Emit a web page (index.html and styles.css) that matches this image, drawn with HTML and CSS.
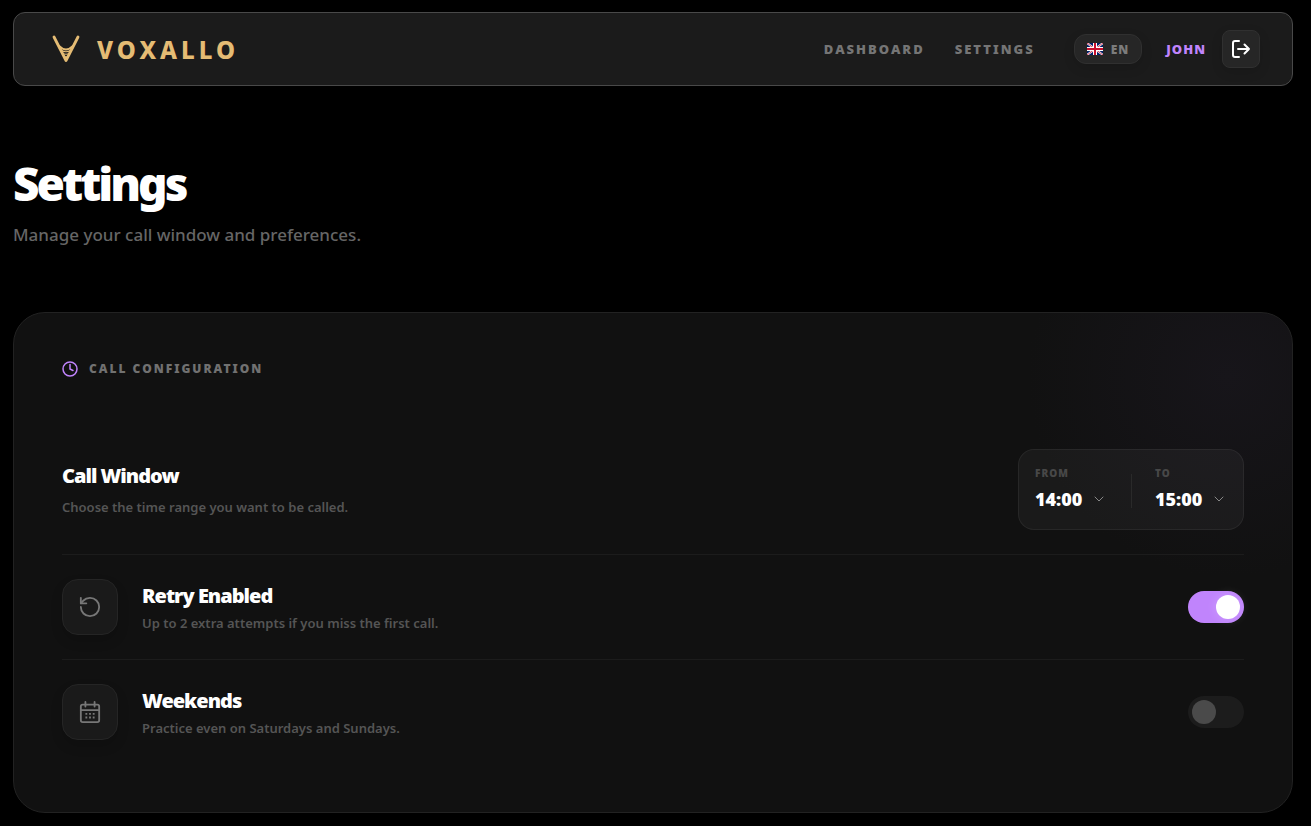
FILE: index.html
```html
<!DOCTYPE html>
<html lang="en">
<head>
    <meta charset="UTF-8">
    <meta name="viewport" content="width=device-width, initial-scale=1.0">
    <title>Voxallo - Settings</title>
    <link rel="stylesheet" href="styles.css">
</head>
<body>

<header class="navbar">
    <a href="#" class="brand">
        <svg class="brand-logo" viewBox="0 0 28 28" aria-hidden="true">
            <path d="M2 2 L14 25.500 L26 2" stroke-width="2.800"/>
            <path d="M7 11 Q14 18 21 11" stroke-width="2"/>
            <path d="M9 15 Q14 18.500 19 15" stroke-width="1.200"/>
            <path d="M10.500 18.500 Q14 20 17.500 18.500" stroke-width="1.200"/>
            <path d="M12.500 22 L15.500 22 L14 25 Z" stroke-width="1.500"/>
        </svg>
        <span class="brand-name">VOXALLO</span>
    </a>
    <nav class="nav-links">
        <a href="#">DASHBOARD</a>
        <a href="#">SETTINGS</a>
    </nav>
    <button type="button" class="lang-button">
        <svg class="flag" viewBox="0 0 16 12" aria-hidden="true">
            <rect width="16" height="12" fill="#012169"/>
            <path d="M0 0 L16 12 M16 0 L0 12" stroke="#fff" stroke-width="2"/>
            <path d="M0 0 L16 12 M16 0 L0 12" stroke="#c8102e" stroke-width="0.800"/>
            <path d="M8 0 V12 M0 6 H16" stroke="#fff" stroke-width="4"/>
            <path d="M8 0 V12 M0 6 H16" stroke="#c8102e" stroke-width="2"/>
        </svg>
        EN
    </button>
    <a href="#" class="user-name">JOHN</a>
    <button type="button" class="logout-button" aria-label="Log out">
        <svg class="icon" viewBox="0 0 20 20" aria-hidden="true">
            <path d="M8 2 H4 Q2 2 2 4 V16 Q2 18 4 18 H8"/>
            <path d="M7 10 H18 M13.500 5.500 L18 10 L13.500 14.500"/>
        </svg>
    </button>
</header>

<main>
    <h1>Settings</h1>
    <p class="subtitle">Manage your call window and preferences.</p>

    <section class="card">
        <h2 class="card-title">
            <svg class="icon" viewBox="0 0 16 16" aria-hidden="true">
                <circle cx="8" cy="8" r="7"/>
                <path d="M8 3.500 V8 L11 9.500"/>
            </svg>
            CALL CONFIGURATION
        </h2>

        <div class="row row-window">
            <div class="row-text">
                <h3>Call Window</h3>
                <p>Choose the time range you want to be called.</p>
            </div>
            <div class="time-range">
                <div class="time-field">
                    <label for="timeFrom">FROM</label>
                    <select id="timeFrom">
                        <option>13:00</option>
                        <option selected>14:00</option>
                        <option>15:00</option>
                    </select>
                    <svg class="chevron" viewBox="0 0 12 8" aria-hidden="true"><path d="M2 2 L6 6 L10 2"/></svg>
                </div>
                <div class="time-field">
                    <label for="timeTo">TO</label>
                    <select id="timeTo">
                        <option>14:00</option>
                        <option selected>15:00</option>
                        <option>16:00</option>
                    </select>
                    <svg class="chevron" viewBox="0 0 12 8" aria-hidden="true"><path d="M2 2 L6 6 L10 2"/></svg>
                </div>
            </div>
        </div>

        <div class="row">
            <div class="row-icon">
                <svg class="icon" viewBox="0 0 24 24" aria-hidden="true">
                    <path d="M2 12 A10 10 0 1 0 12 2 A10.800 10.800 0 0 0 4.500 5.200 L2 8"/>
                    <path d="M2 2 V8 H8"/>
                </svg>
            </div>
            <div class="row-text">
                <h3><label for="retry">Retry Enabled</label></h3>
                <p>Up to 2 extra attempts if you miss the first call.</p>
            </div>
            <input type="checkbox" class="toggle" id="retry" checked>
        </div>

        <div class="row">
            <div class="row-icon">
                <svg class="icon" viewBox="0 0 24 24" aria-hidden="true">
                    <rect x="2" y="4" width="20" height="19" rx="2"/>
                    <path d="M7 1 V6 M17 1 V6 M2 10 H22"/>
                    <path d="M7 14 h2 M11 14 h2 M15 14 h2 M7 18 h2 M11 18 h2 M15 18 h2" stroke-linecap="butt"/>
                </svg>
            </div>
            <div class="row-text">
                <h3><label for="weekends">Weekends</label></h3>
                <p>Practice even on Saturdays and Sundays.</p>
            </div>
            <input type="checkbox" class="toggle" id="weekends">
        </div>
    </section>
</main>

</body>
</html>
```
FILE: styles.css
```css
* {
    box-sizing: border-box;
}
body {
    font-family: "Segoe UI", "Noto Sans", "Open Sans", sans-serif;
    background-color: #000;
    color: #fff;
    margin: 0;
    padding: 12px 18px 12px 13px;
}
h1, h2, h3, p {
    margin: 0;
}
a {
    text-decoration: none;
}
button {
    font-family: inherit;
    cursor: pointer;
}
.icon {
    fill: none;
    stroke: currentColor;
    stroke-width: 2;
    stroke-linecap: round;
    stroke-linejoin: round;
}

/* navbar */
.navbar {
    display: flex;
    align-items: center;
    height: 74px;
    padding: 0 32px 0 38px;
    background-color: #1b1b1b;
    border: 1px solid #494949;
    border-radius: 12px;
}
.brand {
    display: flex;
    align-items: center;
    gap: 17px;
    margin-right: auto;
    color: #e5bc74;
}
.brand-logo {
    width: 28px;
    height: 28px;
    fill: none;
    stroke: currentColor;
    stroke-linecap: round;
    stroke-linejoin: round;
}
.brand-name {
    font-size: 24px;
    font-weight: 800;
    letter-spacing: 4px;
}
.nav-links {
    display: flex;
    gap: 30px;
    margin-right: 39px;
}
.nav-links a {
    color: #757575;
    font-size: 13px;
    font-weight: 900;
    letter-spacing: 2px;
}
.lang-button {
    display: flex;
    align-items: center;
    gap: 8px;
    height: 30px;
    padding: 0 12px;
    background-color: #262626;
    border: 1px solid #303030;
    border-radius: 12px;
    box-shadow: 0 4px 12px rgba(0, 0, 0, 0.12);
    color: #7c7c7c;
    font-size: 12px;
    font-weight: 900;
    letter-spacing: 1px;
}
.flag {
    width: 16px;
    height: 12px;
}
.user-name {
    margin: 0 16px 0 24px;
    color: #c084fc;
    font-size: 13px;
    font-weight: 900;
    letter-spacing: 1px;
}
.logout-button {
    display: flex;
    align-items: center;
    justify-content: center;
    width: 38px;
    height: 38px;
    padding: 0;
    background-color: #262626;
    border: 1px solid #303030;
    border-radius: 8px;
    box-shadow: 0 4px 12px rgba(0, 0, 0, 0.12);
    color: #fff;
}
.logout-button .icon {
    width: 20px;
    height: 20px;
}

/* page heading */
h1 {
    margin-top: 74px;
    font-size: 46px;
    line-height: 46px;
    font-weight: 900;
    letter-spacing: -3px;
}
.subtitle {
    margin-top: 15px;
    margin-bottom: 63px;
    color: #666;
    font-size: 17px;
    line-height: 28px;
    font-weight: 500;
}

/* settings card */
.card {
    padding: 48px;
    background: radial-gradient(circle at calc(100% - 64px) 64px, #17151a, #111 200px);
    border: 1px solid #222;
    border-radius: 32px;
}
.card-title {
    display: flex;
    align-items: center;
    gap: 11px;
    margin-bottom: 56px;
    color: #717171;
    font-size: 12px;
    line-height: 16px;
    font-weight: 900;
    letter-spacing: 2px;
}
.card-title .icon {
    width: 16px;
    height: 16px;
    color: #c084fc;
    stroke-width: 1.5;
}
.row {
    display: flex;
    align-items: center;
    gap: 24px;
    padding: 24px 0;
}
.row + .row {
    border-top: 1px solid #1c1c1c;
}
.row-window {
    padding-top: 16px;
}
.row-text {
    flex: 1;
}
.row-text h3 {
    font-size: 20px;
    line-height: 28px;
    font-weight: 900;
    letter-spacing: -1px;
}
.row-text p {
    color: #555;
    font-size: 13px;
    line-height: 20px;
    font-weight: 600;
    margin-top: 3px;
}
.row-window p {
    margin-top: 7px;
}
.row-icon {
    display: flex;
    align-items: center;
    justify-content: center;
    width: 56px;
    height: 56px;
    background-color: #1a1a1a;
    border: 1px solid #252525;
    border-radius: 16px;
    box-shadow: 0 6px 12px rgba(0, 0, 0, 0.15);
    color: #777;
}
.row-icon .icon {
    width: 22px;
    height: 22px;
}

/* time range */
.time-range {
    display: flex;
    align-items: center;
    height: 81px;
    padding: 2px 18px 0 16px;
    background-color: rgba(255, 255, 255, 0.04);
    border: 1px solid rgba(255, 255, 255, 0.06);
    border-radius: 16px;
}
.time-field {
    display: grid;
    grid-template-columns: 70px;
    align-items: center;
}
.time-field + .time-field {
    margin-left: 26px;
    padding-left: 24px;
    background: linear-gradient(#2a2a2a, #2a2a2a) 0 50% / 1px 34px no-repeat;
}
.time-field label {
    color: #484848;
    font-size: 10px;
    line-height: 16px;
    font-weight: 900;
    letter-spacing: 1px;
}
.time-field select {
    grid-area: 2 / 1;
    appearance: none;
    width: 70px;
    height: 36px;
    padding: 0;
    background: none;
    border: none;
    color: #fff;
    font-family: inherit;
    font-size: 18px;
    font-weight: 900;
    cursor: pointer;
}
.time-field option {
    background-color: #1a1a1a;
}
.chevron {
    grid-area: 2 / 1;
    justify-self: end;
    width: 12px;
    height: 8px;
    fill: none;
    stroke: #888;
    stroke-linecap: round;
    stroke-linejoin: round;
    pointer-events: none;
}

/* toggle switch */
.toggle {
    appearance: none;
    display: flex;
    width: 56px;
    height: 32px;
    margin: 0;
    padding: 4px;
    background-color: #1c1c1c;
    border-radius: 16px;
    cursor: pointer;
}
.toggle::before {
    content: "";
    width: 24px;
    height: 24px;
    border-radius: 50%;
    background-color: #4a4a4a;
}
.toggle:checked {
    justify-content: flex-end;
    background-color: #c084fc;
}
.toggle:checked::before {
    background-color: #fff;
    box-shadow: 0 0 12px rgba(255, 255, 255, 0.2);
}
```
